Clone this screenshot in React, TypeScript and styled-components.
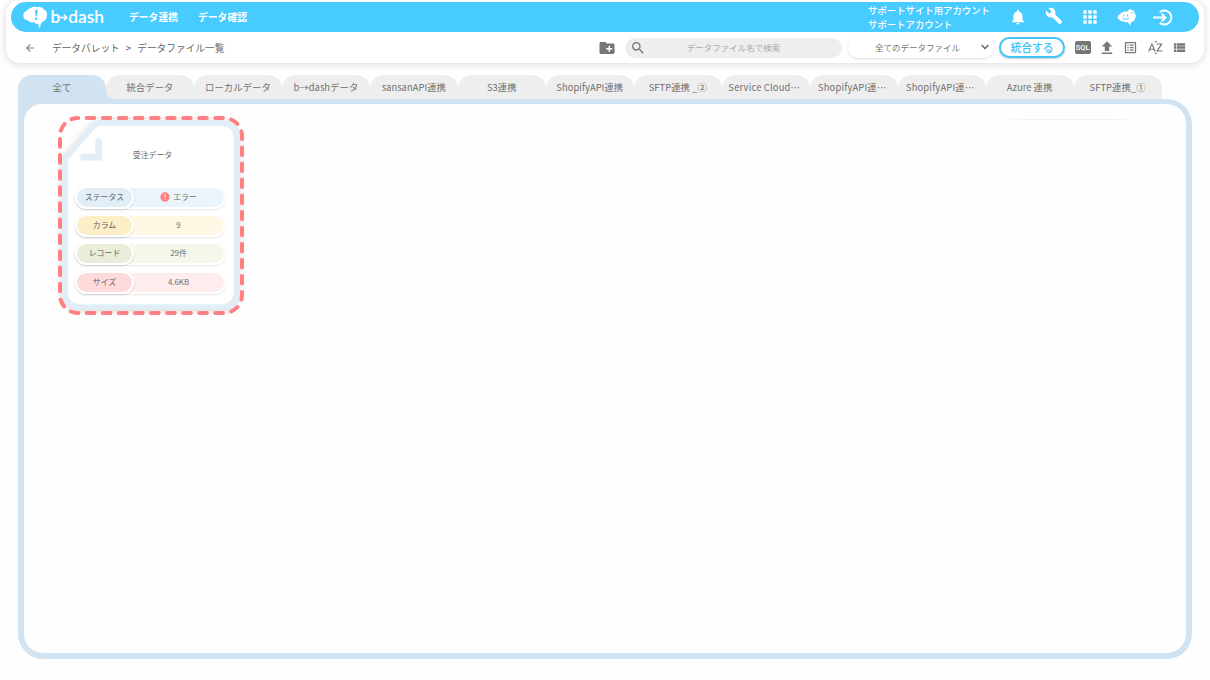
import React from 'react';
import styled, { createGlobalStyle } from 'styled-components';
import {
  MdApps, MdArrowBack, MdBuild, MdCreateNewFolder, MdFileUpload, MdListAlt,
  MdNotifications, MdSearch, MdSortByAlpha, MdViewList,
} from 'react-icons/md';

const GlobalStyle = createGlobalStyle`
  * { box-sizing: border-box; }
  body {
    margin: 0;
    background: #fefefe;
    color: #707070;
    font-family: "Noto Sans CJK JP", "Noto Sans", sans-serif;
    overflow: hidden;
  }
  svg { display: block; flex: none; }
`;

const Page = styled.div`
  width: 1210px;
  height: 680px;
  padding: 0 18px 0 6px;
  overflow: hidden;
`;

const Header = styled.header`
  width: 1198px;
  height: 63px;
  padding: 2px 5px 0;
  background: #fff;
  border-radius: 14px;
  box-shadow: 0 1px 8px rgba(0, 0, 0, 0.15);
`;

const TopBar = styled.div`
  display: flex;
  align-items: center;
  height: 30px;
  padding-left: 12px;
  border-radius: 15px;
  background: #48cbff;
  color: #fff;
`;

const Logo = styled.div`
  display: flex;
  align-items: center;
  width: 106px;
  height: 30px;
`;

const Wordmark = styled.div`
  display: flex;
  align-items: center;
  margin-left: 2.5px;
  font: 600 17.3px/30px Lato, sans-serif;
`;

const NavItem = styled.a`
  width: 69px;
  font-size: 9.8px;
  font-weight: 700;
  line-height: 30px;
  white-space: nowrap;
`;

const Account = styled.div`
  width: 140px;
  margin-left: auto;
  font-size: 9.4px;
  font-weight: 500;
  line-height: 14px;
  white-space: nowrap;
`;

const TopIcons = styled.div`
  display: flex;
  align-items: center;
  width: 191px;
`;

const TopIcon = styled.span<{ $w: number; $up?: number }>`
  display: flex;
  justify-content: center;
  width: ${p => p.$w}px;
  padding-bottom: ${p => p.$up ?? 0}px;
`;

const SubBar = styled.div`
  display: flex;
  align-items: center;
  height: 31px;
  padding-left: 13px;
  color: #777;
`;

const Breadcrumb = styled.div`
  display: flex;
  gap: 6px;
  width: 545.5px;
  margin-left: 16px;
  color: #666;
  font-size: 9.7px;
  white-space: nowrap;
`;

const SearchBox = styled.div`
  display: flex;
  align-items: center;
  width: 217px;
  height: 20px;
  margin-left: 9.5px;
  padding-left: 5px;
  border-radius: 10px;
  background: #eee;
`;

const Placeholder = styled.span`
  flex: 1;
  color: #aaa;
  font-size: 8.5px;
  text-align: center;
  padding: 0 21px 1px 0;
`;

const Select = styled.div`
  display: flex;
  align-items: center;
  justify-content: space-between;
  width: 146px;
  height: 21px;
  margin-left: 6px;
  padding: 0 5px 1px 27px;
  border-radius: 11px;
  background: #fff;
  box-shadow: 0 1px 3px rgba(0, 0, 0, 0.13);
  font-size: 8.5px;
`;

const MergeButton = styled.button`
  width: 66px;
  height: 21px;
  margin: 0 5.5px 0 5px;
  padding: 0;
  border: 2px solid #40c6fb;
  border-radius: 11px;
  background: #fff;
  box-shadow: 0 1px 2px rgba(0, 0, 0, 0.2);
  color: #35c2fa;
  font: 500 10.8px/15px "Noto Sans CJK JP", sans-serif;
`;

const Tool = styled.span`
  display: flex;
  justify-content: center;
  width: 24.2px;
`;

const SqlBadge = styled.span`
  width: 16px;
  height: 13px;
  border-radius: 2px;
  background: #757575;
  color: #fff;
  font: 500 7.5px/13px Roboto, sans-serif;
  text-align: center;
`;

const Tabs = styled.nav`
  display: flex;
  height: 24px;
  margin: 11.5px 0 0 12px;
`;

const Tab = styled.div<{ $active?: boolean; $first?: boolean }>`
  width: 87.98px;
  height: 24px;
  border-radius: ${p => (p.$first ? '14px 14px 0 8px' : '14px 14px 0 0')};
  background: ${p => (p.$active ? '#d1e2f0' : '#eee')};
  font-size: 9.4px;
  line-height: 24px;
  text-align: center;
  white-space: nowrap;
`;

const TabText = styled.span<{ $shortened: boolean }>`
  padding-right: ${p => (p.$shortened ? 3 : 0)}px;
  letter-spacing: ${p => (p.$shortened ? 0.18 : 0.04)}px;
`;

const Ellipsis = styled.span`
  display: inline-block;
  line-height: 1;
`;

const Corner = styled.div`
  background: linear-gradient(#fefefe 12px, #d1e2f0 12px);
  background-size: 20px 24px;
  background-repeat: no-repeat;
`;

const Panel = styled.main`
  width: 1174px;
  height: 560.5px;
  margin-left: 12px;
  padding: 12px 34px;
  border: solid #d1e2f0;
  border-width: 5.5px 6px 6.5px;
  border-radius: 0 25px 25px 25px;
  display: flex;
  justify-content: space-between;
  background: radial-gradient(circle at 18px 18px, #fefefe 17.5px, #d1e2f0 18.5px) 0 0 / 18px 18px no-repeat padding-box, #fefefe;
`;

const FadedEdge = styled.div`
  width: 152px;
  height: 4px;
  margin-right: 6px;
  border-bottom: 1px solid;
  border-image: linear-gradient(90deg, transparent, #eff1f3 25%, #eff1f3 75%, transparent) 1;
`;

const Card = styled.article`
  position: relative;
  width: 186px;
  height: 199px;
  padding: 28px 18px 0 17px;
`;

const CardArt = styled.svg`
  position: absolute;
  inset: 0;
  overflow: visible;
`;

const CardShape = styled.path`
  filter: drop-shadow(0 1px 3px rgba(0, 0, 0, 0.18));
`;

const CardTitle = styled.h3`
  position: relative;
  height: 42px;
  margin: 0 0 0 4px;
  color: #666;
  font-size: 7.9px;
  font-weight: 400;
  line-height: 22px;
  text-align: center;
`;

const Rows = styled.div`
  position: relative;
  display: flex;
  flex-direction: column;
  gap: 5.4px;
`;

const Row = styled.div<{ $bg: string }>`
  display: flex;
  width: 151px;
  height: 23px;
  border: 2px solid #fff;
  border-radius: 12px;
  background: ${p => p.$bg};
  background-clip: padding-box;
  box-shadow: 0 1px 2px rgba(0, 0, 0, 0.1);
  font-size: 7.9px;
  line-height: 18px;
  text-align: center;
`;

const RowLabel = styled.div<{ $bg: string }>`
  width: 59px;
  height: 23px;
  margin: -2px 0 0 -2px;
  border: 2px solid #fff;
  border-radius: 12px;
  background: ${p => p.$bg};
  box-shadow: 0 1px 2px rgba(0, 0, 0, 0.13);
  color: #666;
`;

const RowValue = styled.div`
  display: flex;
  flex: 1;
  align-items: center;
  justify-content: center;
  gap: 3px;
  padding: 0 1px 1px 0;
`;

const tabs = [
  '全て', '統合データ', 'ローカルデータ', 'b→dashデータ', 'sansanAPI連携', 'S3連携', 'ShopifyAPI連携',
  'SFTP連携 _②', 'Service Cloud⋯', 'ShopifyAPI連⋯', 'ShopifyAPI連⋯', 'Azure 連携', 'SFTP連携_①',
];

const rows = [
  { label: 'ステータス', value: 'エラー', dark: '#e1eef8', light: '#ebf4fb', error: true },
  { label: 'カラム', value: '9', dark: '#fcefc8', light: '#fff8e5' },
  { label: 'レコード', value: '29件', dark: '#e8eed9', light: '#f5f7ea' },
  { label: 'サイズ', value: '4.6KB', dark: '#fedada', light: '#ffeded' },
];

function LogoBrain() {
  return (
    <svg width="25" height="22" viewBox="0 0 25 22">
      <path d="M7 2.4C9.2.4 12.2.3 14.3 1.2 16.5.4 19.5 1.1 20.6 3.2 23.3 4.2 24.6 7 23.8 9.8c.2 3-1.8 4.9-4.1 5.7-.6 1-1.2 1.8-2 2.2l-.6 3.9c-.6.2-1-.1-1.2-.6l-.8-3.2c-1.6.4-3.3-.3-4.1-1.7-2 .8-4.7.2-5.7-1.5C1.8 14.2.2 12 .4 9.7.3 7.2 1.7 5.4 3.5 5.1 4.1 3.5 5.3 2.7 7 2.4Z" fill="#fff" />
      <path d="M12 4.2L14.9 3.5 13.8 10.2 12.6 10.2Z" fill="#48cbff" />
      <circle cx="13" cy="12.7" r="1.2" fill="#48cbff" />
    </svg>
  );
}

function SupportBrain() {
  return (
    <svg width="20" height="19" viewBox="0 0 20 19">
      <path d="M5.5 4.3C7.3 3.2 9 3.2 10.3 3.8 11.3 1.5 13.4.7 14.6 1.9 16.8 1.9 18 4 17.5 5.3 19.4 6.6 19.5 9.5 17.8 10.7 17.6 13 15.8 14 14.2 13.8L13.3 17.7 10.8 14.1C8.9 15 7.5 14.1 6.8 13.3 4.7 13.7 3.5 12.7 3.1 11.9 1.1 11.8.6 10.2.8 8.8.8 7.2 2 6.3 3.2 6.3 3.6 5.1 4.3 4.5 5.5 4.3Z" fill="#fff" />
      <path d="M6.8 6.5V8.5M10.6 6.5V8.5M5.5 10.3C7.5 11.5 10 11.5 11.8 10.3M14.2 4.4c.8.5 1.4.5 2.1.2" stroke="#48cbff" strokeWidth="1" fill="none" />
    </svg>
  );
}

function ExitIcon() {
  return (
    <svg width="20" height="17" viewBox="0 0 20 17" fill="none" stroke="#fff" strokeWidth="2">
      <path d="M6.8 3.2A7 7 0 1 1 6.8 13.8" />
      <path d="M0 8.5h12M8.7 4.8l3.7 3.7-3.7 3.7" />
    </svg>
  );
}

function CardFrame() {
  return (
    <CardArt width="186" height="199" viewBox="0 0 186 199" fill="none">
      <CardShape
        d="M42 7H162Q178.5 7 178.5 23.5V174.5Q178.5 191 162 191H24Q7 191 7 174.5V45Q7 42 9.5 39.5L35 11Q38 7 42 7Z"
        fill="#fff" stroke="#e1eef8" strokeWidth="5.6"
      />
      <path d="M40.7 25.5V41H25.5" stroke="#e1eef8" strokeWidth="7" strokeLinecap="round" />
      <rect x="2" y="2" width="182" height="195" rx="18" stroke="#ff7f82" strokeWidth="4"
        strokeLinecap="round" strokeDasharray="7.6 8.47" strokeDashoffset="-8.7" />
    </CardArt>
  );
}

function ErrorIcon() {
  return (
    <svg width="10" height="10" viewBox="0 0 10 10">
      <circle cx="5" cy="5" r="4.7" fill="#ff7f82" />
      <path d="M5 2.4V5.5M5 6.8V7.7" stroke="#fff" strokeWidth="1" />
    </svg>
  );
}

export default function App() {
  return (
    <>
      <GlobalStyle />
      <Page>
        <Header>
          <TopBar>
            <Logo>
              <LogoBrain />
              <Wordmark>
                b
                <svg width="8" height="8" viewBox="0 0 8 8" fill="none" stroke="#fff" strokeWidth="1.5">
                  <path d="M0 4.5H6.5M4 1.8L6.7 4.5 4 7.2" />
                </svg>
                dash
              </Wordmark>
            </Logo>
            <NavItem>データ連携</NavItem>
            <NavItem>データ確認</NavItem>
            <Account>サポートサイト用アカウント<br />サポートアカウント</Account>
            <TopIcons>
              <TopIcon $w={20}><MdNotifications size={18} /></TopIcon>
              <TopIcon $w={52} $up={3}><MdBuild size={18} /></TopIcon>
              <TopIcon $w={20}><MdApps size={20} /></TopIcon>
              <TopIcon $w={53}><SupportBrain /></TopIcon>
              <TopIcon $w={20}><ExitIcon /></TopIcon>
            </TopIcons>
          </TopBar>
          <SubBar>
            <MdArrowBack size={12} />
            <Breadcrumb><span>データパレット</span><span>&gt;</span><span>データファイル一覧</span></Breadcrumb>
            <MdCreateNewFolder size={18} />
            <SearchBox><MdSearch size={16} /><Placeholder>データファイル名で検索</Placeholder></SearchBox>
            <Select>
              全てのデータファイル
              <svg width="8" height="6" viewBox="0 0 8 6" fill="none" stroke="#707070" strokeWidth="1.6"><path d="M.7 1L4 4.5 7.3 1" /></svg>
            </Select>
            <MergeButton>統合する</MergeButton>
            <Tool><SqlBadge>SQL</SqlBadge></Tool>
            <Tool><MdFileUpload size={18} /></Tool>
            <Tool><MdListAlt size={15} /></Tool>
            <Tool><MdSortByAlpha size={17} /></Tool>
            <Tool><MdViewList size={15} /></Tool>
          </SubBar>
        </Header>
        <Tabs>
          {tabs.map((name, i) => {
            const shortened = name.endsWith('⋯');
            const tab = (
              <Tab $active={i === 0} $first={i === 1}>
                <TabText $shortened={shortened}>
                  {name.replace('⋯', '')}
                  {shortened && <Ellipsis>⋯</Ellipsis>}
                </TabText>
              </Tab>
            );
            return i === 1 ? <Corner key={i}>{tab}</Corner> : <React.Fragment key={i}>{tab}</React.Fragment>;
          })}
        </Tabs>
        <Panel>
          <Card>
            <CardFrame />
            <CardTitle>受注データ</CardTitle>
            <Rows>
              {rows.map(r => (
                <Row key={r.label} $bg={r.light}>
                  <RowLabel $bg={r.dark}>{r.label}</RowLabel>
                  <RowValue>{r.error && <ErrorIcon />}{r.value}</RowValue>
                </Row>
              ))}
            </Rows>
          </Card>
          <FadedEdge />
        </Panel>
      </Page>
    </>
  );
}
